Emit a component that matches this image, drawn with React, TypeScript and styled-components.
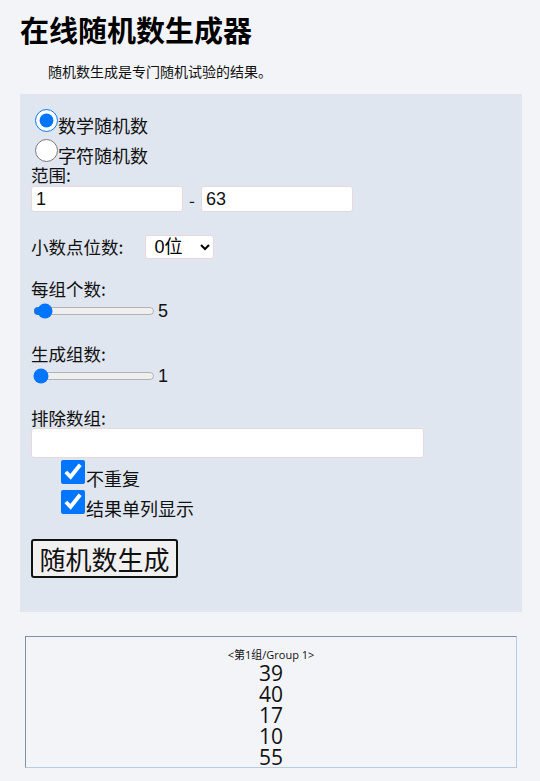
import React from "react";
import styled, { createGlobalStyle } from "styled-components";

const Global = createGlobalStyle`
  html, body {
    margin: 0;
    padding: 0;
    background: #f3f4f7;
    font-family: "Noto Sans CJK SC", "Liberation Sans", sans-serif;
    color: #111;
  }
`

const Page = styled.div`
  padding: 0 18px 0 20px;
`

const Title = styled.h1`
  margin: 0;
  padding-top: 10px;
  font-size: 29px;
  line-height: 38px;
  font-weight: 700;
  color: #000;
`

const Intro = styled.p`
  margin: 14px 0 0 28px;
  font-size: 14px;
  line-height: 18px;
`

const Panel = styled.section`
  margin-top: 14px;
  background: #e0e6ef;
  padding: 11px 11px 34px 11px;
  display: flex;
  flex-direction: column;
`

const RadioRow = styled.label`
  display: flex;
  align-items: flex-end;
  height: 30px;
  font-size: 18px;
  >input{
    width: 23px;
    height: 23px;
    margin: 0 0 3px 4px;
    accent-color: #0075ff;
  }
  >span{
    line-height: 20px;
  }
`

const FieldLabel = styled.div<{ gap?: number }>`
  font-size: 17.5px;
  line-height: 20px;
  margin-top: ${p => p.gap ?? 0}px;
`

const RangeRow = styled.div`
  display: flex;
  align-items: center;
  gap: 6px;
  margin-top: 1px;
  >span{
    font-size: 17px;
  }
`

const TextBox = styled.input<{ w: number; h?: number }>`
  box-sizing: border-box;
  width: ${p => p.w}px;
  height: ${p => p.h ?? 26}px;
  border: 1px solid #e8d8dc;
  border-radius: 3px;
  background: #fff;
  font-family: "Liberation Sans", sans-serif;
  font-size: 18px;
  padding: 0 4px;
  color: #111;
  outline: none;
`

const DecimalRow = styled.div`
  display: flex;
  align-items: center;
  margin-top: 22px;
  font-size: 17.5px;
  >span{
    margin-right: 22px;
  }
  >select{
    width: 69px;
    height: 24px;
    border: 1px solid #e8d8dc;
    border-radius: 3px;
    background: #fff;
    font-size: 18px;
    font-family: "Liberation Sans", "Noto Sans CJK SC", sans-serif;
    padding: 0 4px;
  }
`

const SliderRow = styled.div`
  display: flex;
  align-items: center;
  height: 22px;
  margin-top: 1px;
  >input{
    width: 122px;
    margin: 0 3px 0 2px;
    accent-color: #0075ff;
  }
  >span{
    font-family: "Liberation Sans", sans-serif;
    font-size: 18px;
  }
`

const CheckRow = styled.label`
  display: flex;
  align-items: flex-end;
  height: 30px;
  padding-left: 30px;
  font-size: 18px;
  >input{
    width: 24px;
    height: 24px;
    margin: 0 1px 4px 0;
    accent-color: #0075ff;
  }
  >span{
    line-height: 20px;
  }
`

const GenButton = styled.button`
  align-self: flex-start;
  margin-top: 21px;
  width: 147px;
  height: 39px;
  border: 2px solid #111;
  border-radius: 3px;
  background: #f0f0f0;
  font-family: "Noto Sans CJK SC", sans-serif;
  font-size: 26px;
  line-height: 1;
  padding: 0;
  color: #111;
`

const ResultBox = styled.div`
  margin: 24px 5px 0 5px;
  height: 132px;
  box-sizing: border-box;
  border: 1px solid;
  border-color: #8190a4 #b6cce0 #b6cce0 #8190a4;
  text-align: center;
  padding-top: 10px;
  overflow: hidden;
`

const GroupHead = styled.div`
  font-size: 11px;
  line-height: 16px;
  font-family: "Open Sans", "Noto Sans CJK SC", sans-serif;
`

const Num = styled.div`
  font-family: "Open Sans", sans-serif;
  font-size: 21px;
  line-height: 21px;
`

const nums = [39, 40, 17, 10, 55]

export default function App() {
  return (
    <Page>
      <Global />
      <Title>在线随机数生成器</Title>
      <Intro>随机数生成是专门随机试验的结果。</Intro>
      <Panel>
        <RadioRow><input type="radio" name="t" defaultChecked /><span>数学随机数</span></RadioRow>
        <RadioRow><input type="radio" name="t" /><span>字符随机数</span></RadioRow>
        <FieldLabel>范围:</FieldLabel>
        <RangeRow>
          <TextBox w={152} defaultValue="1" />
          <span>-</span>
          <TextBox w={152} defaultValue="63" />
        </RangeRow>
        <DecimalRow>
          <span>小数点位数:</span>
          <select defaultValue="0"><option value="0">0位</option></select>
        </DecimalRow>
        <FieldLabel gap={20}>每组个数:</FieldLabel>
        <SliderRow><input type="range" min={1} max={100} defaultValue={5} /><span>5</span></SliderRow>
        <FieldLabel gap={22}>生成组数:</FieldLabel>
        <SliderRow><input type="range" min={1} max={100} defaultValue={1} /><span>1</span></SliderRow>
        <FieldLabel gap={21}>排除数组:</FieldLabel>
        <TextBox w={393} h={30} />
        <CheckRow><input type="checkbox" defaultChecked /><span>不重复</span></CheckRow>
        <CheckRow><input type="checkbox" defaultChecked /><span>结果单列显示</span></CheckRow>
        <GenButton>随机数生成</GenButton>
      </Panel>
      <ResultBox>
        <GroupHead>&lt;第1组/Group 1&gt;</GroupHead>
        {nums.map(n => <Num key={n}>{n}</Num>)}
      </ResultBox>
    </Page>
  )
}
